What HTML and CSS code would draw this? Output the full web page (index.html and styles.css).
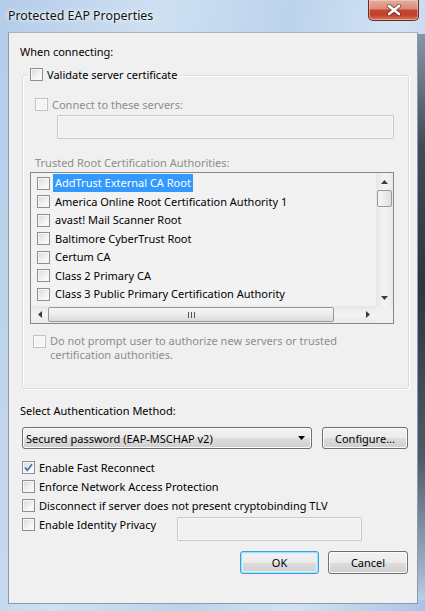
FILE: index.html
```html
<!DOCTYPE html>
<html>
<head>
<meta charset="utf-8">
<link rel="stylesheet" href="styles.css">
</head>
<body>
<div class="window">
  <div class="titlebar">
    <span class="title">Protected EAP Properties</span>
    <div class="close">
      <svg width="16" height="12" viewBox="0 0 16 12"><path d="M3 2 L13 10 M13 2 L3 10" stroke="#3a1410" stroke-width="4.2" stroke-linecap="round" opacity="0.55"/><path d="M3 2 L13 10 M13 2 L3 10" stroke="#fff" stroke-width="2.6" stroke-linecap="round"/></svg>
    </div>
  </div>
  <div class="client">
    <div class="label when">When connecting:</div>
    <div class="group">
      <div class="legend"><span class="cb"></span><span>Validate server certificate</span></div>
      <div class="row connect disabled"><span class="cb"></span><span>Connect to these servers:</span></div>
      <div class="input servers"></div>
      <div class="label trusted disabled">Trusted Root Certification Authorities:</div>
      <div class="listbox">
        <div class="items">
          <div class="item"><span class="cb"></span><span class="txt sel">AddTrust External CA Root</span></div>
          <div class="item"><span class="cb"></span><span class="txt">America Online Root Certification Authority 1</span></div>
          <div class="item"><span class="cb"></span><span class="txt">avast! Mail Scanner Root</span></div>
          <div class="item"><span class="cb"></span><span class="txt">Baltimore CyberTrust Root</span></div>
          <div class="item"><span class="cb"></span><span class="txt">Certum CA</span></div>
          <div class="item"><span class="cb"></span><span class="txt">Class 2 Primary CA</span></div>
          <div class="item"><span class="cb"></span><span class="txt">Class 3 Public Primary Certification Authority</span></div>
        </div>
        <div class="vscroll">
          <div class="arrow"><svg width="7" height="4" viewBox="0 0 7 4"><path d="M0 4 L3.5 0 L7 4Z" fill="#3c3c3c"/></svg></div>
          <div class="vthumb"></div>
          <div class="vspace"></div>
          <div class="arrow"><svg width="7" height="4" viewBox="0 0 7 4"><path d="M0 0 L3.5 4 L7 0Z" fill="#3c3c3c"/></svg></div>
        </div>
        <div class="hscroll">
          <div class="harrow"><svg width="4" height="7" viewBox="0 0 4 7"><path d="M4 0 L0 3.5 L4 7Z" fill="#3c3c3c"/></svg></div>
          <div class="hthumb"><svg width="7" height="6" viewBox="0 0 7 6"><path d="M0.5 0V6M3.5 0V6M6.5 0V6" stroke="#555" stroke-width="1"/></svg></div>
          <div class="hspace"></div>
          <div class="harrow"><svg width="4" height="7" viewBox="0 0 4 7"><path d="M0 0 L4 3.5 L0 7Z" fill="#3c3c3c"/></svg></div>
        </div>
        <div class="corner"></div>
      </div>
      <div class="row prompt disabled"><span class="cb"></span><span>Do not prompt user to authorize new servers or trusted<br>certification authorities.</span></div>
    </div>
    <div class="label method">Select Authentication Method:</div>
    <div class="comborow">
      <div class="combo"><span>Secured password (EAP-MSCHAP v2)</span><svg width="7" height="4" viewBox="0 0 7 4"><path d="M0 0 L3.5 4 L7 0Z" fill="#000"/></svg></div>
      <div class="btn configure">Configure...</div>
    </div>
    <div class="checks">
      <div class="crow"><span class="cb checked"><svg width="11" height="11" viewBox="0 0 11 11"><path d="M2 5.5 L4.3 8.3 L9 2.2" fill="none" stroke="#4d6ab0" stroke-width="1.7"/></svg></span><span>Enable Fast Reconnect</span></div>
      <div class="crow"><span class="cb"></span><span>Enforce Network Access Protection</span></div>
      <div class="crow"><span class="cb"></span><span>Disconnect if server does not present cryptobinding TLV</span></div>
      <div class="crow identity"><span class="cb"></span><span class="idlabel">Enable Identity Privacy</span><div class="input idbox"></div></div>
    </div>
    <div class="buttons">
      <div class="btn ok">OK</div>
      <div class="btn cancel">Cancel</div>
    </div>
  </div>
</div>
</body>
</html>
```

FILE: styles.css
```css
html, body {
  margin: 0;
  padding: 0;
  background: #9fb9d6;
}
.window {
  width: 425px;
  height: 611px;
  box-sizing: border-box;
  font-family: "Noto Sans", "Open Sans", sans-serif;
  font-size: 11px;
  color: #000;
  background:
    linear-gradient(180deg, #8796a8 0%, #414a56 20%, #2d3541 45%, #505a67 75%, #9db2c9 95%, #b9d0ea 100%) right 0 top 34px / 7px 566px no-repeat,
    linear-gradient(100deg, #b3cce8 0%, #cfe0f2 30%, #bcd3ec 55%, #d2e2f3 75%, #aac5e4 100%);
  display: flex;
  flex-direction: column;
}
.titlebar {
  height: 32px;
  display: flex;
  align-items: flex-start;
  justify-content: space-between;
  padding-left: 8px;
  padding-right: 6px;
}
.title {
  margin-top: 8px;
  font-size: 12.4px;
  line-height: 16px;
  color: #111;
  text-shadow: 0 0 6px #fff, 0 0 3px #fff;
}
.close {
  width: 51px;
  height: 21px;
  box-sizing: border-box;
  border: 1px solid #6a2a22;
  border-top: none;
  border-radius: 0 0 5px 5px;
  background: linear-gradient(180deg, #e6ad9f 0%, #d98a7a 45%, #c5452f 50%, #c1412b 75%, #d87760 100%);
  box-shadow: inset 0 0 0 1px rgba(255,220,210,0.5);
  display: flex;
  align-items: center;
  justify-content: center;
}
.client {
  margin-left: 8px;
  width: 410px;
  height: 572px;
  box-sizing: border-box;
  background: #f0f0f0;
  border: 1px solid #8c9cae;
  border-color: #a6b5c7 #8c9cae #8c9cae #8c9cae;
}
.label {
  line-height: 15px;
  height: 15px;
  white-space: nowrap;
}
.disabled, .disabled span { color: #8d8d8d; }
.when {
  margin-top: 11px;
  margin-left: 11px;
}
.cb {
  display: inline-block;
  flex: none;
  width: 13px;
  height: 13px;
  box-sizing: border-box;
  border: 1px solid #8e8f8f;
  background: linear-gradient(135deg, #d6d8dc 0%, #f3f3f3 60%, #ffffff 100%);
  box-shadow: inset 0 0 0 1px #f7f7f7;
}
.cb.checked svg { display: block; margin: 0; }
.disabled .cb {
  border-color: #c2c2c2;
  background: #f4f4f4;
  box-shadow: inset 0 0 0 1px #fbfbfb;
}
.group {
  margin-top: 16px;
  margin-left: 13px;
  width: 387px;
  height: 314px;
  box-sizing: border-box;
  border: 1px solid #d5dfe5;
  border-radius: 3px;
  box-shadow: inset 1px 1px 0 #fff, 1px 1px 0 #fff;
}
.legend {
  margin-top: -9px;
  margin-left: 6px;
  height: 15px;
  line-height: 15px;
  display: flex;
  align-items: center;
  gap: 4px;
  width: fit-content;
  padding-right: 3px;
  padding-left: 1px;
  background: #f0f0f0;
  white-space: nowrap;
}
.row {
  display: flex;
  gap: 4px;
  line-height: 15px;
  white-space: nowrap;
}
.connect {
  margin-top: 15px;
  margin-left: 12px;
  height: 15px;
  align-items: center;
}
.input {
  height: 24px;
  box-sizing: border-box;
  border: 1px solid #c9c9c9;
  border-radius: 2px;
  background: #f0f0f0;
  box-shadow: inset 0 0 0 1px #f7f7f7;
}
.servers {
  margin-top: 3px;
  margin-left: 34px;
  width: 337px;
}
.trusted {
  margin-top: 16px;
  margin-left: 12px;
}
.listbox {
  margin-top: 2px;
  margin-left: 7px;
  width: 364px;
  height: 152px;
  box-sizing: border-box;
  border: 1px solid #828790;
  background: #f2f2f2;
  display: grid;
  grid-template-columns: 1fr 17px;
  grid-template-rows: 1fr 17px;
}
.items {
  padding-top: 1px;
  padding-left: 6px;
  overflow: hidden;
}
.item {
  height: 18.5px;
  display: flex;
  align-items: center;
  gap: 3px;
  white-space: nowrap;
}
.txt {
  padding: 0 2px;
  line-height: 18px;
  color: #000;
}
.txt.sel {
  background: #3399ff;
  color: #fff;
}
.vscroll {
  display: flex;
  flex-direction: column;
  background: linear-gradient(90deg, #e6e6e6, #f4f4f4 50%, #e9e9e9);
}
.arrow {
  height: 17px;
  display: flex;
  align-items: center;
  justify-content: center;
}
.vthumb {
  height: 17px;
  margin: 0 1px;
  box-sizing: border-box;
  border: 1px solid #9a9a9a;
  border-radius: 2px;
  background: linear-gradient(90deg, #f6f6f6, #ececec 50%, #dedede);
}
.vspace { flex: 1; }
.hscroll {
  display: flex;
  background: linear-gradient(180deg, #e6e6e6, #f4f4f4 50%, #e9e9e9);
}
.harrow {
  width: 17px;
  display: flex;
  align-items: center;
  justify-content: center;
}
.hthumb {
  width: 286px;
  margin: 1px 0;
  box-sizing: border-box;
  border: 1px solid #9a9a9a;
  border-radius: 2px;
  background: linear-gradient(180deg, #f6f6f6, #ececec 50%, #dadada);
  display: flex;
  align-items: center;
  justify-content: center;
}
.hspace { flex: 1; }
.corner { background: #f0f0f0; }
.prompt {
  margin-top: 10px;
  margin-left: 10px;
  line-height: 14px;
  align-items: flex-start;
}
.prompt .cb { margin-top: 1px; }
.method {
  margin-top: 14px;
  margin-left: 11px;
}
.comborow {
  margin-top: 9px;
  margin-left: 13px;
  display: flex;
  gap: 10px;
  height: 22px;
}
.combo, .btn {
  box-sizing: border-box;
  border: 1px solid #707070;
  border-radius: 3px;
  background: linear-gradient(180deg, #f2f2f2 0%, #ebebeb 50%, #dddddd 51%, #cfcfcf 100%);
  box-shadow: inset 0 0 0 1px #fbfbfb;
}
.combo {
  width: 290px;
  height: 22px;
  display: flex;
  align-items: center;
  justify-content: space-between;
  padding: 0 6px 0 3px;
  white-space: nowrap;
}
.btn {
  display: flex;
  align-items: center;
  justify-content: center;
  white-space: nowrap;
}
.configure {
  width: 86px;
  height: 22px;
}
.checks {
  margin-top: 8.5px;
  margin-left: 13px;
}
.crow {
  height: 19px;
  display: flex;
  align-items: center;
  gap: 4px;
  white-space: nowrap;
}
.crow.identity {
  height: auto;
  align-items: flex-start;
}
.crow.identity .cb { margin-top: 3px; }
.crow.identity .idlabel { line-height: 19px; }
.idlabel {
  width: 134px;
  flex: none;
}
.idbox {
  margin-top: 2.5px;
  width: 185px;
}
.buttons {
  margin-top: 10px;
  margin-right: 9px;
  display: flex;
  justify-content: flex-end;
  gap: 9px;
}
.ok, .cancel {
  height: 23px;
}
.ok {
  width: 79px;
  border-color: #3c9fd9;
  box-shadow: inset 0 0 0 1px #9fe2fb, inset 0 0 0 2px #d6f1fd;
}
.cancel { width: 80px; }
```
